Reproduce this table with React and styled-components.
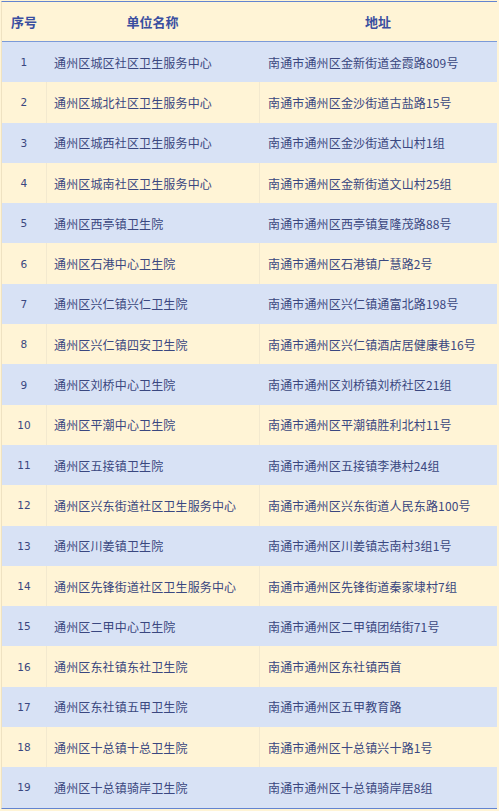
import React from "react";
import styled, { createGlobalStyle } from "styled-components";

const Global = createGlobalStyle`
  html, body { margin: 0; padding: 0; background: #fff4d6; }
  body { font-family: "Noto Sans CJK SC", "Noto Sans", sans-serif; }
`;

const data = [
  ["通州区城区社区卫生服务中心", "南通市通州区金新街道金霞路809号"],
  ["通州区城北社区卫生服务中心", "南通市通州区金沙街道古盐路15号"],
  ["通州区城西社区卫生服务中心", "南通市通州区金沙街道太山村1组"],
  ["通州区城南社区卫生服务中心", "南通市通州区金新街道文山村25组"],
  ["通州区西亭镇卫生院", "南通市通州区西亭镇复隆茂路88号"],
  ["通州区石港中心卫生院", "南通市通州区石港镇广慧路2号"],
  ["通州区兴仁镇兴仁卫生院", "南通市通州区兴仁镇通富北路198号"],
  ["通州区兴仁镇四安卫生院", "南通市通州区兴仁镇酒店居健康巷16号"],
  ["通州区刘桥中心卫生院", "南通市通州区刘桥镇刘桥社区21组"],
  ["通州区平潮中心卫生院", "南通市通州区平潮镇胜利北村11号"],
  ["通州区五接镇卫生院", "南通市通州区五接镇李港村24组"],
  ["通州区兴东街道社区卫生服务中心", "南通市通州区兴东街道人民东路100号"],
  ["通州区川姜镇卫生院", "南通市通州区川姜镇志南村3组1号"],
  ["通州区先锋街道社区卫生服务中心", "南通市通州区先锋街道秦家埭村7组"],
  ["通州区二甲中心卫生院", "南通市通州区二甲镇团结街71号"],
  ["通州区东社镇东社卫生院", "南通市通州区东社镇西首"],
  ["通州区东社镇五甲卫生院", "南通市通州区五甲教育路"],
  ["通州区十总镇十总卫生院", "南通市通州区十总镇兴十路1号"],
  ["通州区十总镇骑岸卫生院", "南通市通州区十总镇骑岸居8组"],
];

const Page = styled.div`
  padding: 1px 2px 0 1px;
`;

const Table = styled.div`
  border-top: 1.5px solid #6384d0;
  border-bottom: 1.5px solid #6384d0;
  border-left: 1px solid #efe2c2;
`;

const HeaderRow = styled.div`
  display: grid;
  grid-template-columns: 44px 213px 1fr;
  height: 39px;
  background: #fff4d6;
  border-bottom: 1.5px solid #7b9ad8;
`;

const HeadCell = styled.div`
  display: flex;
  align-items: center;
  justify-content: center;
  color: #3a4ea0;
  font-weight: 700;
  font-size: 13px;
`;

const Row = styled.div`
  display: grid;
  grid-template-columns: 44px 213px 1fr;
  height: 40.3px;
  background: ${(p) => (p.$alt ? "#fff4d6" : "#d8e2f5")};
`;

const Cell = styled.div`
  display: flex;
  align-items: center;
  justify-content: ${(p) => (p.$center ? "center" : "flex-start")};
  padding-left: ${(p) => (p.$center ? "0" : p.$pad || "7px")};
  border-left: ${(p) => (p.$first ? "none" : `1px solid ${p.$alt ? "#f3e9cf" : "#d8e2f5"}`)};
  color: #3a4780;
  font-size: 12px;
  letter-spacing: 0.15px;
  white-space: nowrap;
  overflow: hidden;
`;

const Num = styled.span`
  font-family: "DejaVu Sans", sans-serif;
  font-size: 10.5px;
`;

export default function App() {
  return (
    <>
      <Global />
      <Page>
        <Table>
          <HeaderRow>
            <HeadCell>序号</HeadCell>
            <HeadCell>单位名称</HeadCell>
            <HeadCell>地址</HeadCell>
          </HeaderRow>
          {data.map(([name, addr], i) => {
            const alt = i % 2 === 1;
            return (
              <Row key={i} $alt={alt}>
                <Cell $center $first $alt={alt}>
                  <Num>{i + 1}</Num>
                </Cell>
                <Cell $alt={alt} $pad="7px">{name}</Cell>
                <Cell $alt={alt} $pad="8px">{addr}</Cell>
              </Row>
            );
          })}
        </Table>
      </Page>
    </>
  );
}
